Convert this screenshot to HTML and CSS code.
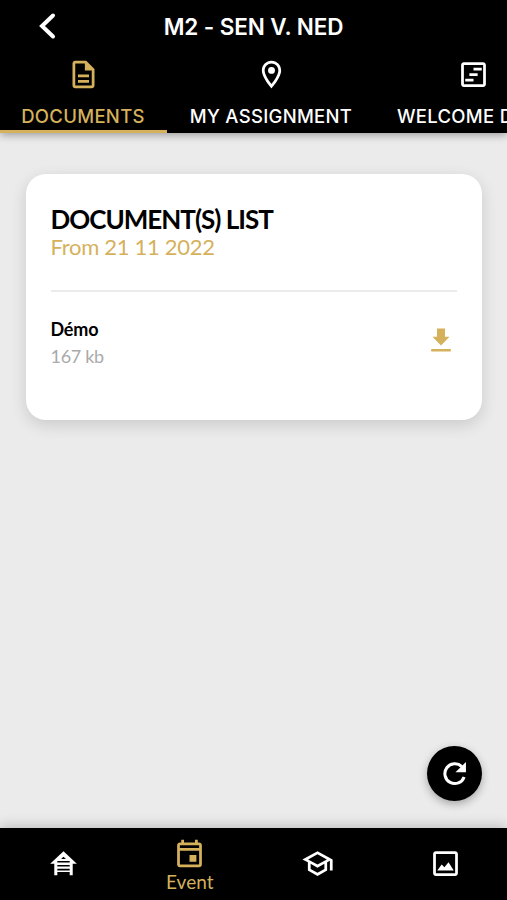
FILE: index.html
```html
<!DOCTYPE html>
<html lang="en">
<head>
  <meta charset="UTF-8">
  <meta name="viewport" content="width=device-width, initial-scale=1.0">
  <title>M2 - SEN V. NED</title>
  <link rel="stylesheet" href="styles.css">
</head>
<body>

  <header class="header">
    <div class="title-bar">
      <button class="back-btn" aria-label="Back">
        <svg width="20" height="30" viewBox="0 0 20 30"><path d="M16 4.500 5 15l11 10.500" fill="none" stroke="currentColor" stroke-width="4" stroke-linecap="round"/></svg>
      </button>
      <h1>M2 - SEN V. NED</h1>
    </div>
    <nav class="tabs">
      <a class="tab tab-documents active">
        <svg class="icon" viewBox="0 0 24 24"><path d="M8 16h8v2H8zm0-4h8v2H8zm6-10H6c-1.100 0-2 .9-2 2v16c0 1.100.89 2 1.990 2H18c1.100 0 2-.9 2-2V8zm4 18H6V4h7v5h5z"/></svg>
        <span>DOCUMENTS</span>
      </a>
      <a class="tab tab-assignment">
        <svg class="icon" viewBox="0 0 24 24"><path d="M12 2C8.130 2 5 5.130 5 9c0 5.250 7 13 7 13s7-7.750 7-13c0-3.870-3.130-7-7-7zM7 9c0-2.760 2.240-5 5-5s5 2.240 5 5c0 2.880-2.880 7.190-5 9.880C9.920 16.210 7 11.850 7 9z"/><circle cx="12" cy="9" r="2.500"/></svg>
        <span>MY ASSIGNMENT</span>
      </a>
      <a class="tab tab-welcome">
        <svg class="icon" viewBox="0 0 24 24"><path d="M19 3H5c-1.100 0-2 .9-2 2v14c0 1.100.9 2 2 2h14c1.100 0 2-.9 2-2V5c0-1.100-.9-2-2-2zm0 16H5V5h14zM12 7h6v2h-6zM9 11h6v2H9zM6 15h6v2H6z"/></svg>
        <span>WELCOME DESK</span>
      </a>
    </nav>
  </header>

  <main class="content">
    <section class="card">
      <h2>DOCUMENT(S) LIST</h2>
      <p class="date">From 21 11 2022</p>
      <div class="document">
        <div>
          <p class="name">Démo</p>
          <p class="size">167 kb</p>
        </div>
        <svg class="download" viewBox="0 0 20 24"><path d="M6 .5h8v8.300h4.500L10 17.500 1.500 8.800H6z"/><rect y="21" width="20" height="2.600" rx="1"/></svg>
      </div>
    </section>
    <button class="refresh-btn" aria-label="Refresh">
      <svg class="icon" viewBox="0 0 24 24"><path d="M19 14.500A7.200 7.200 0 1 1 17.300 7" fill="none" stroke="currentColor" stroke-width="2.200"/><path d="M20.300 3.700v7.300h-7.600z"/></svg>
    </button>
  </main>

  <nav class="bottom-nav">
    <a class="nav-item">
      <svg class="icon" viewBox="0 0 24 24"><path d="M12 3 2.300 12.200h3V20.500h2.200v-2.300h9v2.300h2.200v-8.300h3zM10.200 8.700 12 7l1.800 1.700zM7.500 11.200v-1h9v1zM7.500 13h9v1.100h-9zM7.500 15.900h9V17h-9z" fill-rule="evenodd"/></svg>
    </a>
    <a class="nav-item active">
      <svg class="icon" viewBox="0 0 24 24"><path d="M19 4h-1V2h-2v2H8V2H6v2H5c-1.110 0-1.990.9-1.990 2L3 20c0 1.100.89 2 2 2h14c1.100 0 2-.9 2-2V6c0-1.100-.9-2-2-2zm0 16H5V10h14zm0-12H5V6h14zM12 13h5v5h-5z"/></svg>
      <span>Event</span>
    </a>
    <a class="nav-item">
      <svg class="icon" viewBox="0 0 24 24"><path d="M12 3 1 9l4 2.180v6L12 21l7-3.820v-6l2-1.090V17h2V9zm6.820 6L12 12.720 5.180 9 12 5.280zM17 15.990l-5 2.730-5-2.730v-3.720L12 15l5-2.730z"/></svg>
    </a>
    <a class="nav-item">
      <svg class="icon" viewBox="0 0 24 24"><path d="M19 3H5c-1.100 0-2 .9-2 2v14c0 1.100.9 2 2 2h14c1.100 0 2-.9 2-2V5c0-1.100-.9-2-2-2zm0 16H5V5h14zM6 17l3.200-4.200 2 2 3-3.800L18 17z"/></svg>
    </a>
  </nav>

</body>
</html>
```
FILE: styles.css
```css
* {
  box-sizing: border-box;
}
body {
  margin: 0;
  height: 900px;
  display: flex;
  flex-direction: column;
  overflow: hidden;
  font-family: Lato, sans-serif;
  background: #ebebeb;
}
h1, h2, p {
  margin: 0;
}
button {
  padding: 0;
  border: none;
  color: white;
}
.icon {
  width: 33px;
  height: 33px;
  fill: currentColor;
  flex: none;
}
.header {
  height: 133px;
  background: black;
  color: white;
  font-family: Inter, sans-serif;
  box-shadow: 0 2px 8px rgba(0,0,0,0.35);
}
.title-bar {
  height: 54px;
  display: grid;
  grid-template-columns: 93px 1fr 93px;
  align-items: center;
}
.back-btn {
  height: 30px;
  margin-top: -2px;
  background: none;
}
.title-bar h1 {
  font-size: 22.500px;
  line-height: 54px;
  font-weight: 600;
  letter-spacing: -0.1px;
  text-align: center;
}
.tabs {
  height: 79px;
  display: flex;
  overflow: hidden;
}
.tab {
  flex: none;
  display: flex;
  flex-direction: column;
  align-items: center;
  padding-top: 4px;
  font-size: 18.500px;
  font-weight: 500;
  letter-spacing: 0.3px;
  white-space: nowrap;
  border-bottom: 3px solid transparent;
}
.tab span {
  line-height: 24px;
  margin-top: 13px;
}
.tab-documents {
  width: 167px;
  padding-right: 1px;
}
.tab-assignment {
  width: 208px;
}
.tab-welcome {
  width: 197px;
}
.active {
  color: #d5b15c;
}
.tab.active {
  border-color: #d5b15c;
}
.content {
  flex: 1;
  display: flex;
  flex-direction: column;
  justify-content: space-between;
  padding: 41px 25px 27px 26px;
}
.card {
  height: 246px;
  padding: 30px 25px 30px 24.500px;
  background: white;
  border-radius: 20px;
  box-shadow: 0 5px 16px rgba(0,0,0,0.14);
}
.card h2 {
  font-size: 26px;
  line-height: 30px;
  font-weight: 700;
  letter-spacing: -1px;
}
.date {
  font-size: 22px;
  line-height: 26px;
  letter-spacing: -0.3px;
  color: #d5b15c;
}
.document {
  display: flex;
  justify-content: space-between;
  margin-top: 30px;
  padding-top: 24px;
  border-top: 2px solid #ebebeb;
}
.name {
  font-size: 18px;
  line-height: 27px;
  font-weight: 700;
  letter-spacing: -0.2px;
}
.size {
  font-size: 18px;
  line-height: 27px;
  letter-spacing: -0.3px;
  color: #aaa;
}
.download {
  width: 20px;
  height: 24px;
  margin: 12px 6px 0 0;
  fill: #d5b15c;
}
.refresh-btn {
  width: 55px;
  height: 55px;
  display: flex;
  align-items: center;
  justify-content: center;
  align-self: flex-end;
  border-radius: 50%;
  background: black;
  box-shadow: 0 3px 8px rgba(0,0,0,0.3);
}
.bottom-nav {
  height: 72px;
  display: grid;
  grid-template-columns: repeat(4, 127.200px);
  background: black;
  color: white;
  box-shadow: 0 -2px 12px rgba(0,0,0,0.2);
}
.nav-item {
  display: flex;
  flex-direction: column;
  align-items: center;
  justify-content: center;
  padding-bottom: 1px;
}
.nav-item span {
  font-size: 19px;
  line-height: 22px;
  margin-top: 1px;
}
.nav-item.active {
  padding: 2px 2px 0 0;
}
```
